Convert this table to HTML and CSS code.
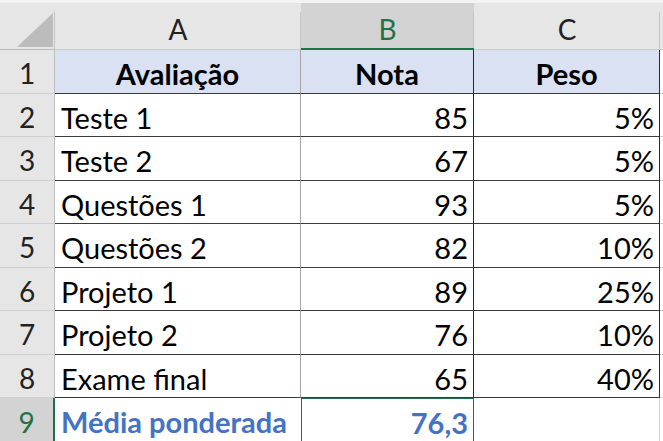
FILE: index.html
```html
<!DOCTYPE html>
<html lang="pt">
<head>
<meta charset="utf-8">
<title>Média ponderada</title>
<link rel="stylesheet" href="styles.css">
</head>
<body>
<div class="sheet">
  <div class="hd corner"><svg class="tri" width="36" height="34" viewBox="0 0 36 34"><polygon points="36,0 36,34 0,34" fill="#bcbcbc"/></svg></div>
  <div class="hd col">A</div>
  <div class="hd col sel">B</div>
  <div class="hd col">C</div>
  <div class="hd col end"></div>

  <div class="rh">1</div>
  <div class="c t1 a th">Avaliação</div>
  <div class="c t1 b th">Nota</div>
  <div class="c t1 cc th">Peso</div>
  <div class="c x"></div>

  <div class="rh">2</div>
  <div class="c t a">Teste 1</div>
  <div class="c t b n">85</div>
  <div class="c t cc n">5%</div>
  <div class="c x"></div>

  <div class="rh">3</div>
  <div class="c t a">Teste 2</div>
  <div class="c t b n">67</div>
  <div class="c t cc n">5%</div>
  <div class="c x"></div>

  <div class="rh">4</div>
  <div class="c t a">Questões 1</div>
  <div class="c t b n">93</div>
  <div class="c t cc n">5%</div>
  <div class="c x"></div>

  <div class="rh">5</div>
  <div class="c t a">Questões 2</div>
  <div class="c t b n">82</div>
  <div class="c t cc n">10%</div>
  <div class="c x"></div>

  <div class="rh">6</div>
  <div class="c t a">Projeto 1</div>
  <div class="c t b n">89</div>
  <div class="c t cc n">25%</div>
  <div class="c x"></div>

  <div class="rh">7</div>
  <div class="c t a">Projeto 2</div>
  <div class="c t b n">76</div>
  <div class="c t cc n">10%</div>
  <div class="c x"></div>

  <div class="rh">8</div>
  <div class="c t a">Exame final</div>
  <div class="c t b n">65</div>
  <div class="c t cc n">40%</div>
  <div class="c x"></div>

  <div class="rh rsel">9</div>
  <div class="c last a blue">Média ponderada</div>
  <div class="c last b n blue active">76,3</div>
  <div class="c last cc"></div>
  <div class="c x"></div>
</div>
</body>
</html>
```
FILE: styles.css
```css
html, body {
  margin: 0;
  padding: 0;
  background: #ffffff;
}
body {
  font-family: Lato, "Open Sans", "Liberation Sans", sans-serif;
  color: #000;
  overflow: hidden;
}
.sheet {
  display: grid;
  grid-template-columns: 55px 246px 173px 186px 3px;
  grid-template-rows: 50px 44px 43px 44px 43px 44px 43px 44px 43px 44px;
  width: 663px;
  height: 441px;
  overflow: hidden;
}
.hd {
  background-color: #e6e6e6;
  border-top: 3px solid #f4f4f4;
  box-sizing: border-box;
  border-bottom: 1px solid #c9c9c9;
  background-image: linear-gradient(#c4c4c4, #c4c4c4);
  background-size: 1px calc(100% - 9px);
  background-position: right bottom;
  background-repeat: no-repeat;
}
.corner {
  display: flex;
  align-items: flex-end;
  justify-content: flex-end;
  padding: 0 2px 2px 0;
  border-bottom-color: #bdbdbd;
}
.tri { display: block; }
.col {
  display: flex;
  align-items: center;
  justify-content: center;
  font-size: 28px;
  padding-top: 6px;
  color: #222;
}
.col.sel {
  background-color: #d3d3d3;
  color: #217346;
  border-bottom: 2px solid #217346;
}
.col.end { background-image: none; }

.rh {
  background: #e6e6e6;
  box-sizing: border-box;
  border-right: 1px solid #bdbdbd;
  border-bottom: 1px solid #cfcfcf;
  display: flex;
  align-items: center;
  justify-content: center;
  font-size: 28px;
  padding-top: 3px;
  color: #222;
}
.rh.rsel {
  background: #d3d3d3;
  color: #217346;
  border-right: 2px solid #217346;
  border-bottom: none;
}

.c {
  box-sizing: border-box;
  display: flex;
  align-items: center;
  font-size: 29px;
  padding: 4px 6px 0 6px;
  white-space: nowrap;
  overflow: hidden;
}
.c.x {
  padding: 0;
  border-bottom: 1px solid #d4d4d4;
}
.t1 {
  background: #d9e1f2;
  justify-content: center;
  font-weight: 700;
}
.t, .t1 { border-bottom: 1px solid #3a3a3a; }
.a.t, .a.t1 { border-right: 1px solid #a3a3a3; }
.b.t, .b.t1, .cc.t, .cc.t1 { border-right: 1px solid #2a2a2a; }
.n {
  justify-content: flex-end;
  padding-right: 5px;
}
.last { border-bottom: 1px solid #d4d4d4; }
.last.cc { border-right: 1px solid #d4d4d4; }
.blue {
  color: #4472c4;
  font-weight: 700;
}
.active {
  border: 1px solid #217346;
  border-bottom: none;
}
```
